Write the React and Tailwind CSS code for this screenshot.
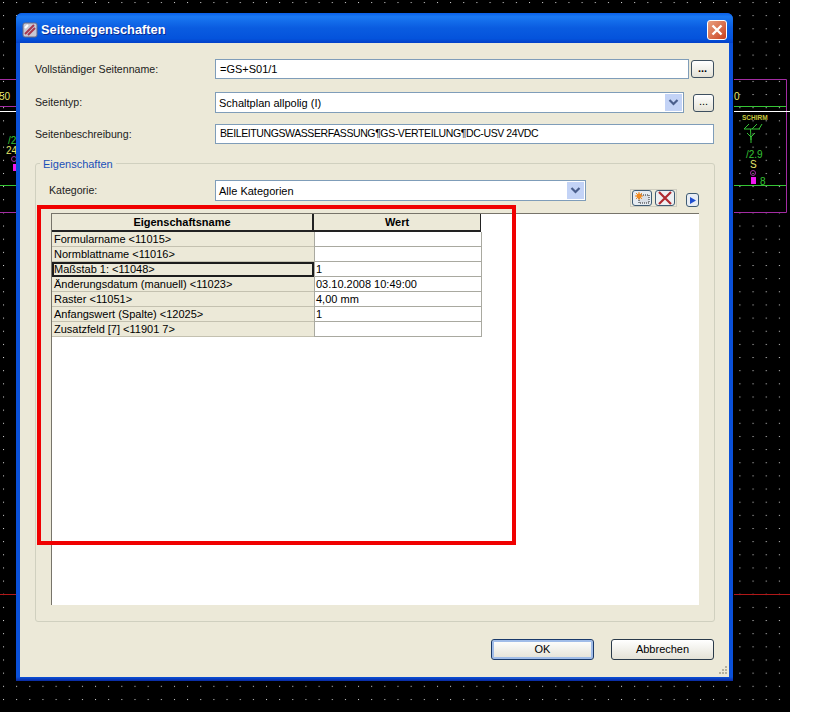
const font = "font-['Liberation_Sans',sans-serif]"

const properties = [
  { name: 'Formularname <11015>', value: '' },
  { name: 'Normblattname <11016>', value: '' },
  { name: 'Maßstab 1: <11048>', value: '1', focused: true },
  { name: 'Änderungsdatum (manuell) <11023>', value: '03.10.2008 10:49:00' },
  { name: 'Raster <11051>', value: '4,00 mm' },
  { name: 'Anfangswert (Spalte) <12025>', value: '1' },
  { name: 'Zusatzfeld [7] <11901 7>', value: '' },
]

function CadBackground() {
  return (
    <svg className="absolute left-0 top-0" width="790" height="712">
      <defs>
        <pattern id="grid" x="3" y="2" width="13.15" height="13.15" patternUnits="userSpaceOnUse">
          <rect width="1" height="1" fill="#d8d8d8" />
        </pattern>
      </defs>
      <rect width="790" height="712" fill="#000" />
      <rect width="790" height="712" fill="url(#grid)" />
      {/* left edge */}
      <path d="M0 79.5H16M0 106.5H16M0 212.5H16" stroke="#a32ca3" />
      <path d="M0 111.5H16" stroke="#fff" />
      <path d="M0 185.5H16" stroke="#35c435" />
      <text x="-1" y="100" fontSize="10" fill="#e6e66a" fontFamily="Liberation Sans">50</text>
      <text x="8" y="144" fontSize="10" fill="#35c435" fontFamily="Liberation Sans">/2</text>
      <text x="6" y="154" fontSize="10" fill="#e6e66a" fontFamily="Liberation Sans">24</text>
      <circle cx="14" cy="159" r="2.5" fill="none" stroke="#a32ca3" />
      <rect x="13" y="164" width="3" height="7" fill="#f018f0" />
      {/* right edge */}
      <path d="M734 79.5H786.5V212.5H734" fill="none" stroke="#a32ca3" />
      <path d="M734 106.5H786" stroke="#35c435" />
      <path d="M734 111.5H790" stroke="#fff" />
      <path d="M734 185.5H786" stroke="#35c435" />
      <text x="734" y="100" fontSize="10" fill="#e6e66a" fontFamily="Liberation Sans">0</text>
      <text x="742" y="120" fontSize="6.5" fontWeight="700" fill="#c8c83c" fontFamily="Liberation Sans">SCHIRM</text>
      <path d="M744 129L749 124M744 129H760M752 129L757 124M759 129L762 124M750.500 129L751 140M751 137L747 133M751 137L755 133M751 137V143" fill="none" stroke="#35c435" />
      <text x="746" y="158" fontSize="10" fill="#35c435" fontFamily="Liberation Sans">/2.9</text>
      <text x="750" y="168" fontSize="10" fill="#e6e66a" fontFamily="Liberation Sans">S</text>
      <circle cx="753" cy="173" r="2.5" fill="none" stroke="#a32ca3" />
      <rect x="751" y="177" width="5" height="7" fill="#f018f0" />
      <text x="760" y="185" fontSize="10" fill="#35c435" fontFamily="Liberation Sans">8</text>
      {/* red line */}
      <path d="M0 594.5H16M734 594.5H790" stroke="#b01818" />
    </svg>
  )
}

function DotsButton({ className }) {
  return (
    <button className={`flex items-center justify-center rounded-[3px] border border-[#3d4f5f] bg-linear-to-b from-white to-[#e4e2d6] text-[11px] font-bold leading-none text-black ${className}`}>
      <span className="-mt-[2px]">...</span>
    </button>
  )
}

function Chevron() {
  return (
    <span className="flex h-[17px] w-[17px] items-center justify-center bg-[#c3d3f6]">
      <svg width="11" height="9" viewBox="0 0 11 9">
        <path d="M1.500 2L5.500 6L9.500 2" fill="none" stroke="#4a5f8c" strokeWidth="2.200" />
      </svg>
    </span>
  )
}

function FormRow({ label, children, className = '' }) {
  return (
    <div className={`flex items-center ${className}`}>
      <span className="w-[180px] shrink-0 pt-[1px] text-[10.6px] text-[#222]">{label}</span>
      {children}
    </div>
  )
}

function Select({ value, className }) {
  return (
    <div className={`flex items-center justify-between border border-[#7f9db9] bg-white pl-[3px] pr-[1px] text-[11px] text-black ${className}`}>
      <span className="pt-[1px]">{value}</span>
      <Chevron />
    </div>
  )
}

function TextBox({ value, className }) {
  return (
    <div className={`flex items-center border border-[#7f9db9] bg-white pl-[4px] text-black ${className}`}>
      {value}
    </div>
  )
}

function PropertyGrid() {
  return (
    <div className="ml-[15px] h-[392px] w-[648px] border-l border-t border-[#77746a] bg-white">
      <div className="flex h-[18px] w-[429px] border-b-2 border-[#222] bg-[#ece9d8] text-[11px] font-bold leading-[16px] text-black">
        <div className="w-[262px] border-r-2 border-[#222] text-center">Eigenschaftsname</div>
        <div className="w-[167px] border-r border-[#222] text-center">Wert</div>
      </div>
      {properties.map((p) => (
        <div key={p.name} className="flex h-[15px] w-[430px] text-[11px] leading-[14px] text-black">
          <div className={`w-[262px] truncate ${p.focused ? 'border-2 border-[#1c1c1c] bg-[#ece9d8] leading-[11px]' : 'border-b border-[#c4c1b0] bg-[#ece9d8] pl-[2px]'}`}>
            {p.name}
          </div>
          <div className="w-[168px] border-x border-b border-x-[#a9a9a0] border-b-[#a9a9a0] pl-[1px]">{p.value}</div>
        </div>
      ))}
    </div>
  )
}

function Toolbar() {
  return (
    <div className="flex items-end">
      <div className="flex h-[18px] items-center gap-[3px] border border-[#cfcdc0] px-[1px]">
        <button className="flex h-[16px] w-[20px] items-center justify-center rounded-[3px] border border-[#3f5c74] bg-[#e6ecf2]">
          <svg width="16" height="12" viewBox="0 0 16 12">
            <rect x="5" y="3" width="10" height="8" fill="#d9dfe6" stroke="#222" strokeDasharray="1 1" />
            <circle cx="5" cy="4" r="2.500" fill="#f28a1e" />
            <path d="M5 0V8M1 4H9M2 1L8 7M8 1L2 7" stroke="#f28a1e" />
          </svg>
        </button>
        <button className="flex h-[16px] w-[20px] items-center justify-center rounded-[3px] border border-[#3f5c74] bg-[#eef0f2]">
          <svg width="16" height="14" viewBox="0 0 16 14">
            <path d="M2 1L14 13M14 1L2 13" stroke="#b02a30" strokeWidth="2.200" />
          </svg>
        </button>
      </div>
      <button className="ml-[9px] flex h-[14px] w-[13px] items-center justify-center rounded-[3px] border border-[#3f5c74] bg-[#e8edf4]">
        <svg width="9" height="9" viewBox="0 0 9 9">
          <path d="M2 1L8 4.500L2 8Z" fill="#1f4fd0" />
        </svg>
      </button>
    </div>
  )
}

function Dialog() {
  return (
    <div className={`absolute left-[16px] top-[13px] flex h-[668px] w-[717px] flex-col rounded-t-[6px] bg-[linear-gradient(to_bottom,#0a50d8_664px,#0a2aa0)] ${font}`}>
      {/* title bar */}
      <div className="flex h-[30px] shrink-0 items-center rounded-t-[6px] bg-[linear-gradient(to_bottom,#0a5fe8,#1a78f2_12%,#0a5ce0_50%,#0453dc_85%,#0340c8)] pl-[6px] pr-[6px] pt-[3px]">
        <svg width="16" height="16" viewBox="0 0 16 16" className="shrink-0">
          <rect x="1" y="1" width="14" height="14" rx="2" fill="#c8c8d4" stroke="#6a6a80" />
          <path d="M3 12L12 3M6 13L13 6" stroke="#a83850" strokeWidth="2" />
          <path d="M3 6L6 3" stroke="#fff" strokeWidth="2" />
        </svg>
        <span className="ml-[3px] text-[12.8px] font-bold text-white [text-shadow:1px_1px_0_#0a2a90]">Seiteneigenschaften</span>
        <button className="ml-auto flex h-[20px] w-[20px] items-center justify-center rounded-[3px] border border-white bg-linear-to-br from-[#e8a080] to-[#c83c18]">
          <svg width="12" height="12" viewBox="0 0 12 12">
            <path d="M1.500 1.500L10.500 10.500M10.500 1.500L1.500 10.500" stroke="#fff" strokeWidth="2.400" />
          </svg>
        </button>
      </div>

      {/* client area */}
      <div className="relative mx-[4px] mb-[4px] flex flex-1 flex-col bg-[#ece9d8] pl-[15px] pr-[15px]">
        <FormRow label="Vollständiger Seitenname:" className="mt-[16px]">
          <TextBox value="=GS+S01/1" className="h-[20px] w-[475px] text-[11px]" />
          <DotsButton className="ml-[2px] h-[18px] w-[23px]" />
        </FormRow>
        <FormRow label="Seitentyp:" className="mt-[13px]">
          <Select value="Schaltplan allpolig (I)" className="h-[21px] w-[469px]" />
          <DotsButton className="ml-[9px] h-[18px] w-[21px] !font-normal" />
        </FormRow>
        <FormRow label="Seitenbeschreibung:" className="mt-[11px]">
          <TextBox value="BEILEITUNGSWASSERFASSUNG¶GS-VERTEILUNG¶DC-USV 24VDC" className="h-[20px] w-[501px] text-[10.5px] tracking-[-0.4px]" />
        </FormRow>

        {/* group box */}
        <div className="relative mt-[19px] h-[459px] w-[680px] rounded-[3px] border border-[#d0d0bf]">
          <span className="absolute -top-[7px] left-[4px] bg-[#ece9d8] px-[3px] text-[11px] leading-[15px] text-[#1a50b8]">Eigenschaften</span>
          <div className="flex h-[49px] items-start pl-[13px] pt-[16px]">
            <span className="w-[166px] shrink-0 pt-[3px] text-[10.6px] leading-[15px] text-[#222]">Kategorie:</span>
            <Select value="Alle Kategorien" className="h-[21px] w-[371px]" />
            <div className="ml-[44px] mt-[9px]">
              <Toolbar />
            </div>
          </div>
          <PropertyGrid />
        </div>

        {/* footer buttons */}
        <div className="mt-[17px] flex justify-end gap-[17px]">
          <button className="h-[21px] w-[103px] rounded-[3px] border border-[#1a3a6a] bg-linear-to-b from-white to-[#e4e2d6] text-[11px] text-black shadow-[inset_0_0_0_2px_#a0bce8]">OK</button>
          <button className="h-[21px] w-[103px] rounded-[3px] border border-[#2a3a4a] bg-linear-to-b from-white to-[#e4e2d6] text-[11px] text-black">Abbrechen</button>
        </div>

        {/* resize grip */}
        <svg className="absolute bottom-[1px] right-[1px]" width="11" height="11" viewBox="0 0 11 11">
          <path d="M8 1h2v2h-2zM5 4h2v2h-2zM8 4h2v2h-2zM2 7h2v2h-2zM5 7h2v2h-2zM8 7h2v2h-2z" fill="#b5b2a0" />
        </svg>
      </div>
    </div>
  )
}

export default function App() {
  return (
    <div className="relative h-[712px] w-[840px] overflow-hidden bg-white">
      <CadBackground />
      <Dialog />
      {/* red annotation frame on top of the screenshot */}
      <div className="absolute left-[37px] top-[205px] h-[340px] w-[479px] border-4 border-[#f00000]" />
    </div>
  )
}
